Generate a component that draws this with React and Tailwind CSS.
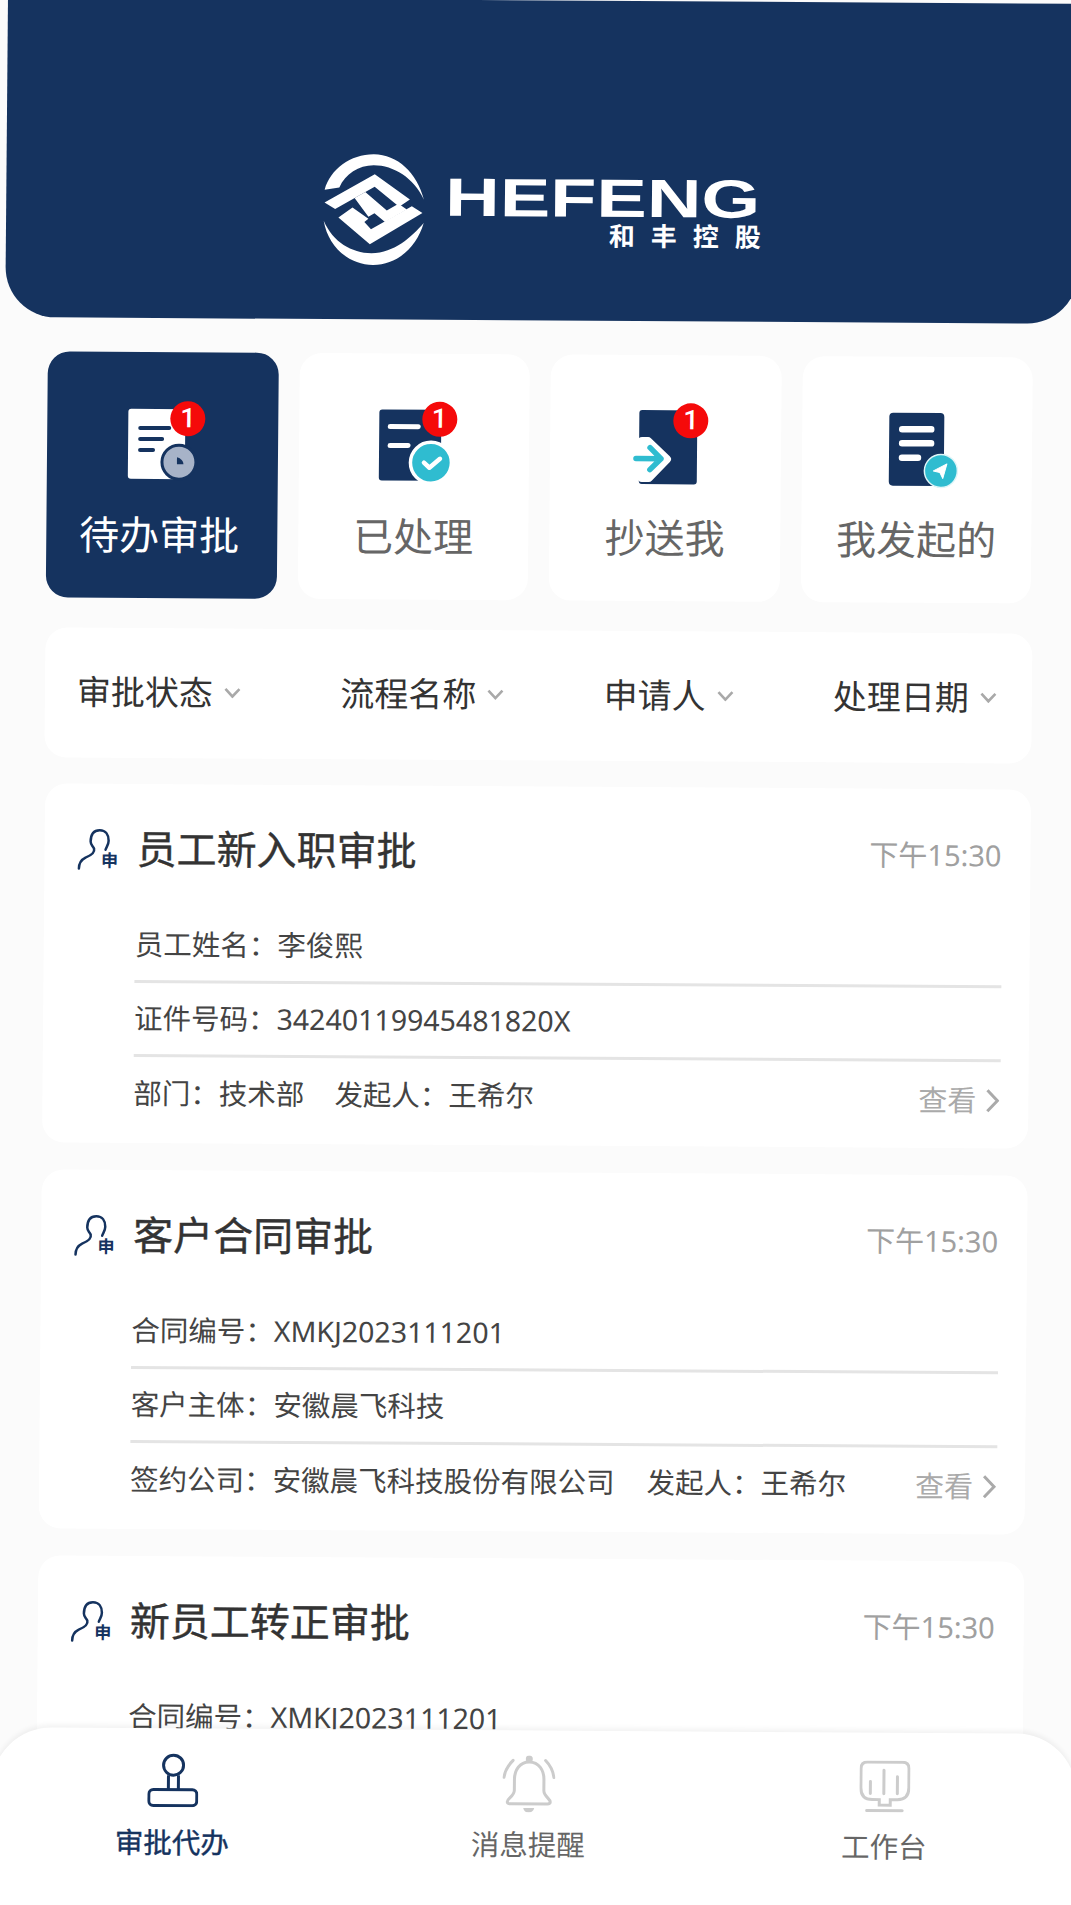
import React from 'react';

const NAVY = '#15335f';
const TEAL = '#2fbcd0';

// Red counter on the tab icons
const Badge = ({ className }) => (
  <span className={`absolute w-[35px] h-[35px] rounded-full bg-[#f50a0a] text-white flex items-center justify-center text-[27px] leading-none font-['Roboto',sans-serif] font-medium ${className}`}>
    1
  </span>
);

const Logo = () => (
  <svg width="500" height="150" viewBox="0 0 500 150" fill="#fff" className="block">
    <g transform="translate(25 20) scale(0.3333)">
      <path d="M28 122C45 60 105 15 175 15C245 15 305 70 326 150C295 85 235 48 175 48C130 48 90 75 72 115Z" />
      <path d="M26 215C40 295 105 347 175 347C245 347 305 295 326 220C290 262 240 310 170 312C110 310 55 280 26 215Z" />
      <polygon points="28,160 178,75 284,150 252,172 178,112 60,180" />
      <polygon points="118,146 150,128 215,183 250,163 275,180 210,218 178,192 160,202" />
      <polygon points="70,205 112,175 160,208 148,218 168,240 290,170 322,190 165,285" />
    </g>
    <text x="155" y="86" fontFamily="'Liberation Sans',sans-serif" fontWeight="700" fontSize="54" textLength="315" lengthAdjust="spacingAndGlyphs">HEFENG</text>
    <text x="319" y="115" fontFamily="'Noto Sans CJK SC',sans-serif" fontWeight="700" fontSize="26" letterSpacing="16">和丰控股</text>
  </svg>
);

const PendingIcon = () => (
  <svg width="90" height="90" viewBox="0 0 90 90" className="block">
    <rect x="11" y="12" width="57" height="70" rx="3" fill="#fff" />
    <g stroke={NAVY} strokeWidth="4" strokeLinecap="round">
      <path d="M23 31H52M23 42H45M23 53H36" />
    </g>
    <circle cx="62" cy="65" r="17" fill="#a7b3c8" stroke={NAVY} strokeWidth="3" />
    <path d="M60 60V67H66.5C66.5 64 64 61 60 60Z" fill={NAVY} />
  </svg>
);

const DoneIcon = () => (
  <svg width="90" height="90" viewBox="0 0 90 90" className="block">
    <rect x="10" y="11" width="62" height="71" rx="3" fill={NAVY} />
    <g stroke="#fff" strokeWidth="5" strokeLinecap="round">
      <path d="M21 28H49M21 47H39" />
    </g>
    <circle cx="62" cy="64" r="20.5" fill={TEAL} stroke="#fff" strokeWidth="3.5" />
    <path d="M55 64L60.5 69L71 60" fill="none" stroke="#fff" strokeWidth="4.5" strokeLinecap="round" strokeLinejoin="round" />
  </svg>
);

const CopyIcon = () => (
  <svg width="90" height="90" viewBox="0 0 90 90" className="block">
    <rect x="19" y="10" width="58" height="74" rx="3" fill={NAVY} />
    <path d="M22 41H28L47 59L29 78H22Z" fill="#fff" stroke="#fff" strokeWidth="8" strokeLinejoin="round" />
    <g fill="none" stroke={TEAL} strokeWidth="5.5" strokeLinecap="round" strokeLinejoin="round">
      <path d="M16 58.5H41M30 47.5L41 58.5L30 69.5" />
    </g>
  </svg>
);

const SentIcon = () => (
  <svg width="90" height="90" viewBox="0 0 90 90" className="block">
    <rect x="17" y="11" width="55" height="73" rx="4" fill={NAVY} />
    <g stroke="#fff" strokeWidth="6.5" strokeLinecap="round">
      <path d="M30 27.5H59M30 41.5H59M30 56H46" />
    </g>
    <circle cx="69" cy="69" r="16.5" fill={TEAL} stroke="#dff5f8" strokeWidth="1.5" />
    <path d="M61.5 69L75 62L71 76.5L68 70.5Z" fill="#fff" stroke="#fff" strokeWidth="1" strokeLinejoin="round" />
  </svg>
);

const ApplicantIcon = () => (
  <svg width="41" height="41" viewBox="0 0 41 41" className="block shrink-0 overflow-visible">
    <path d="M13 13C13 6 16 1.5 22 1.5C28 1.5 31 6 31 12C31 16 29 18 28 21M13 13C13 16 15 17 16.5 20C17.5 24 13 27 8 29C4 31 1.5 34 1.5 40" fill="none" stroke={NAVY} strokeWidth="2.5" strokeLinecap="round" />
    <text x="32" y="38" textAnchor="middle" fontSize="17" fontWeight="700" fill={NAVY} fontFamily="'Noto Sans CJK SC',sans-serif">申</text>
  </svg>
);

const FilterChevron = () => (
  <svg width="17" height="11" viewBox="0 0 17 11" className="block shrink-0 mt-[2px]">
    <path d="M1.5 1.5L8.5 9L15.5 1.5" fill="none" stroke="#a9a9a9" strokeWidth="2.6" />
  </svg>
);

const StampIcon = () => (
  <svg width="51" height="54" viewBox="0 0 51 54" className="block" fill="none" stroke={NAVY} strokeWidth="3">
    <circle cx="26" cy="12" r="10" />
    <path d="M21 22V37M31 22V37" />
    <rect x="1.5" y="36.5" width="48" height="16" rx="4.5" />
  </svg>
);

const BellIcon = () => (
  <svg width="53" height="57" viewBox="0 0 53 57" className="block" fill="none" stroke="#cccccc" strokeWidth="3" strokeLinecap="round">
    <circle cx="26.7" cy="3.5" r="2" fill="#cccccc" />
    <path d="M26.7 6.5C17 6.5 12 15 12 24V35C12 41 5 43 5 46.5Q5 48.5 8 48.5H45Q48 48.5 48 46.5C48 43 41.5 41 41.5 35V24C41.5 15 36.5 6.5 26.7 6.5Z" />
    <path d="M10.5 5C6 9.5 2.5 15 1.5 22M43 5C47.5 9.5 50.5 15 51.5 22" />
    <path d="M21 52.5H32Q31 57 26.5 57Q22 57 21 52.5Z" fill="#cccccc" stroke="none" />
  </svg>
);

const DeskIcon = () => (
  <svg width="51" height="52" viewBox="0 0 51 52" className="block mt-[3px]" fill="none" stroke="#cccccc" strokeWidth="3" strokeLinecap="round">
    <path d="M8 1.5H43Q49.5 1.5 49.5 8V27Q49.5 39 38 39H31V44.5H20V39H13Q1.5 39 1.5 27V8Q1.5 1.5 8 1.5Z" />
    <path d="M11 21V33M24.5 9.5V33M38 16V33" />
    <path d="M7.5 50H43" />
  </svg>
);

const tabs = [
  { label: '待办审批', Icon: PendingIcon, badge: 'left-[53px] top-[4px]', active: true },
  { label: '已处理', Icon: DoneIcon, badge: 'left-[53px] top-[3px]' },
  { label: '抄送我', Icon: CopyIcon, badge: 'left-[53px] top-[3px]' },
  { label: '我发起的', Icon: SentIcon },
];

const filters = ['审批状态', '流程名称', '申请人', '处理日期'];

const Row = ({ label, value, border = true, children }) => (
  <div className={`h-[74px] pb-[1px] flex items-center text-[28.5px] text-[#444] ${border ? 'border-b-[3px] border-[#e4e4e4]' : ''}`}>
    <span>{label}：</span>
    <span>{value}</span>
    {children}
  </div>
);

const ViewLink = () => (
  <span className="ml-auto flex items-center gap-[9px] text-[#aaa] text-[29px] pt-[3px] pr-[1px]">
    查看
    <svg width="14" height="25" viewBox="0 0 14 25" className="block">
      <path d="M2 2L12 12.5L2 23" fill="none" stroke="#aaa" strokeWidth="3" />
    </svg>
  </span>
);

const Card = ({ title, children }) => (
  <div className="bg-white rounded-[22px] h-[359px] pl-[33px] pr-[28px] pt-[38px] shrink-0">
    <div className="flex items-center h-[54px]">
      <ApplicantIcon />
      <h3 className="ml-[18px] text-[40px] font-normal text-[#333] leading-none [-webkit-text-stroke:0.4px_#333]">{title}</h3>
      <span className="ml-auto text-[29px] text-[#a0a0a0] pt-[2px] pr-[1px]">下午15:30</span>
    </div>
    <div className="ml-[58px] mt-[33px]">{children}</div>
  </div>
);

const navItems = [
  { label: '审批代办', Icon: StampIcon, color: 'text-[#15335f] [-webkit-text-stroke:0.4px_#15335f]' },
  { label: '消息提醒', Icon: BellIcon, color: 'text-[#666]' },
  { label: '工作台', Icon: DeskIcon, color: 'text-[#666]' },
];

const App = () => {
  return (
    <div className="w-[1071px] h-[1905px] overflow-hidden bg-[#fbfbfb] font-['Noto_Sans','Noto_Sans_CJK_SC',sans-serif]">
      {/* the shot is slightly sheared, whole page follows it */}
      <div className="relative h-[1940px] origin-top-left skew-x-[-0.5deg] skew-y-[0.36deg]">
        {/* Header */}
        <header className="ml-[8px] -mt-[3px] w-[1072px] h-[320px] bg-[#15335f] rounded-b-[50px] pl-[284px] pt-[130px]">
          <Logo />
        </header>

        <main className="ml-[51px] w-[987px]">
          {/* Tabs */}
          <div className="mt-[34px] w-[985px] grid grid-cols-4 gap-[21px]">
            {tabs.map(({ label, Icon, badge, active }) => (
              <div
                key={label}
                className={`h-[246px] rounded-[22px] pt-[45px] flex flex-col items-center ${active ? 'bg-[#15335f] text-white' : 'bg-white text-[#666]'}`}
              >
                <div className="relative w-[90px] h-[90px]">
                  <Icon />
                  {badge && <Badge className={badge} />}
                </div>
                <div className={`mt-[23px] h-[50px] flex items-center text-[40px] leading-none ${active ? 'pr-[5px]' : ''}`}>{label}</div>
              </div>
            ))}
          </div>

          {/* Filters */}
          <div className="mt-[30px] h-[130px] pb-[3px] bg-white rounded-[22px] pl-[32px] pr-[35px] flex items-center justify-between">
            {filters.map((name) => (
              <div key={name} className="flex items-center gap-[11px] text-[34px] text-[#333] leading-none">
                {name}
                <FilterChevron />
              </div>
            ))}
          </div>

          {/* Approval list */}
          <div className="mt-[26px] ml-[1px] flex flex-col gap-[27px]">
            <Card title="员工新入职审批">
              <Row label="员工姓名" value="李俊熙" />
              <Row label="证件号码" value="34240119945481820X" />
              <Row label="部门" value="技术部" border={false}>
                <span className="ml-[30px]">发起人：王希尔</span>
                <ViewLink />
              </Row>
            </Card>
            <Card title="客户合同审批">
              <Row label="合同编号" value="XMKJ2023111201" />
              <Row label="客户主体" value="安徽晨飞科技" />
              <Row label="签约公司" value="安徽晨飞科技股份有限公司" border={false}>
                <span className="ml-[32px]">发起人：王希尔</span>
                <ViewLink />
              </Row>
            </Card>
            <Card title="新员工转正审批">
              <Row label="合同编号" value="XMKJ2023111201" />
            </Card>
          </div>
        </main>

        {/* Bottom nav */}
        <nav className="absolute left-[7px] top-[1730px] w-[1085px] h-[210px] bg-white rounded-t-[60px] shadow-[0_-3px_5px_rgba(0,0,0,0.05)] pl-[3px] pr-[14px] pt-[25px] grid grid-cols-3">
          {navItems.map(({ label, Icon, color }) => (
            <div key={label} className="flex flex-col items-center">
              <div className="h-[62px] flex items-start"><Icon /></div>
              <div className={`mt-[7px] h-[40px] flex items-center text-[28.5px] leading-none ${color}`}>{label}</div>
            </div>
          ))}
        </nav>
      </div>
    </div>
  );
};

export default App;
